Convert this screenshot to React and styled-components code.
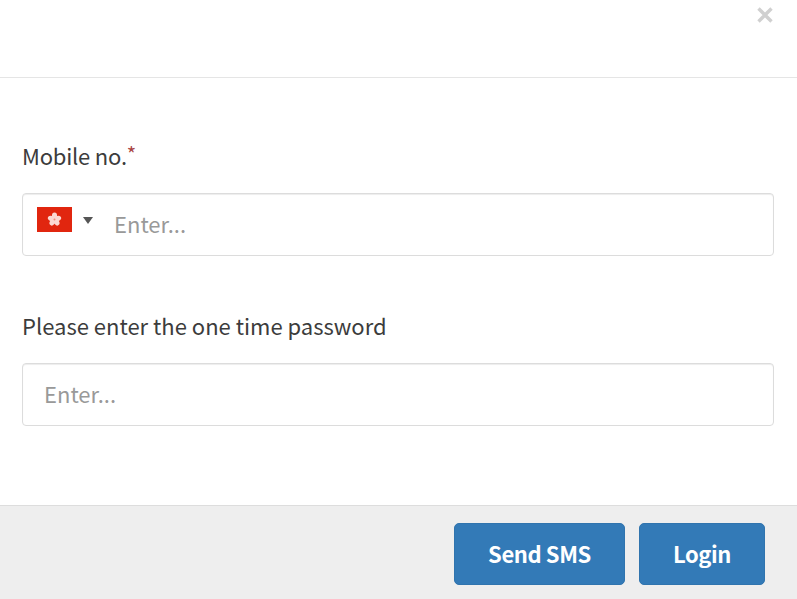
import React from 'react';
import styled, { createGlobalStyle } from 'styled-components';

const Global = createGlobalStyle`
  html, body { margin: 0; padding: 0; background: #fff; overflow: hidden; }
  * { box-sizing: border-box; }
  body { font-family: "Noto Sans CJK SC", "Noto Sans", sans-serif; color: #333; }
`;

const Modal = styled.div`
  width: 797px;
  height: 599px;
  display: flex;
  flex-direction: column;
`;
const Header = styled.header`
  height: 78px;
  border-bottom: 1px solid #e5e5e5;
  display: flex;
  justify-content: flex-end;
  align-items: flex-start;
  padding: 6px 23px 0 0;
`;
const Close = styled.button`
  width: 18px;
  height: 18px;
  padding: 0;
  border: 0;
  background: none;
  display: block;
`;
const Body = styled.main`
  flex: 1;
  padding: 64px 23px 0 22px;
  display: flex;
  flex-direction: column;
`;
const Field = styled.div`
  height: 170px;
`;
const Label = styled.label`
  display: block;
  font-size: 22px;
  line-height: 26px;
  height: 51px;
  color: #3c3c3c;
  letter-spacing: ${p => p.$tight ? '-0.2px' : '0'};
`;
const Star = styled.span`
  color: #a94442;
  font-size: 20px;
  line-height: 0;
  vertical-align: 3px;
`;
const InputBox = styled.div`
  height: 63px;
  border: 1px solid #dcdcdc;
  border-radius: 4px;
  box-shadow: inset 0 1px 1px rgba(0,0,0,.075);
  display: flex;
  align-items: center;
  background: #fff;
`;
const Input = styled.input`
  flex: 1;
  min-width: 0;
  border: 0;
  outline: 0;
  background: transparent;
  font: inherit;
  font-size: 22px;
  color: #333;
  padding: 0 0 3px ${p => p.$inset}px;
  height: 100%;
  &::placeholder { color: #999; opacity: 1; }
`;
const FlagButton = styled.div`
  display: flex;
  align-items: flex-start;
  width: 70px;
  margin-left: 14px;
  height: 100%;
  padding-top: 13px;
`;
const Caret = styled.span`
  width: 0;
  height: 0;
  margin: 10px 0 0 11px;
  border-left: 5.5px solid transparent;
  border-right: 5.5px solid transparent;
  border-top: 7px solid #555;
`;
const Footer = styled.footer`
  height: 94px;
  background: #eee;
  border-top: 1px solid #ddd;
  display: flex;
  justify-content: flex-end;
  gap: 14px;
  padding: 17px 32px 0 0;
`;
const Button = styled.button`
  width: ${p => p.$w}px;
  height: 62px;
  background: #337ab7;
  border: 1px solid #3074ae;
  border-radius: 5px;
  color: #fff;
  font: inherit;
  font-size: 22px;
  font-weight: 700;
  letter-spacing: -0.4px;
  padding: 0 0 3px;
`;

const Flag = () => (
  <svg width="35" height="25" viewBox="0 0 35 25">
    <rect width="35" height="25" fill="#e1260f" />
    <g fill="#fbd9d3">
      {[0, 72, 144, 216, 288].map(a => (
        <ellipse key={a} cx="17.5" cy="9" rx="2.6" ry="3.4" transform={`rotate(${a} 17.5 12.5)`} />
      ))}
    </g>
    <circle cx="17.5" cy="12.5" r="1" fill="#f08a7c" />
  </svg>
);

export default function App() {
  return (
    <>
      <Global />
      <Modal>
        <Header>
          <Close aria-label="Close">
            <svg width="18" height="18" viewBox="0 0 18 18">
              <path d="M2.5 2.5 L15.5 15.5 M15.5 2.5 L2.5 15.5" stroke="#d0d0d0" strokeWidth="3.4" />
            </svg>
          </Close>
        </Header>
        <Body>
          <Field>
            <Label $tight>Mobile no.<Star>*</Star></Label>
            <InputBox>
              <FlagButton><Flag /><Caret /></FlagButton>
              <Input $inset={7} placeholder="Enter..." />
            </InputBox>
          </Field>
          <Field>
            <Label>Please enter the one time password</Label>
            <InputBox>
              <Input $inset={21} placeholder="Enter..." />
            </InputBox>
          </Field>
        </Body>
        <Footer>
          <Button $w={171}>Send SMS</Button>
          <Button $w={126}>Login</Button>
        </Footer>
      </Modal>
    </>
  );
}
